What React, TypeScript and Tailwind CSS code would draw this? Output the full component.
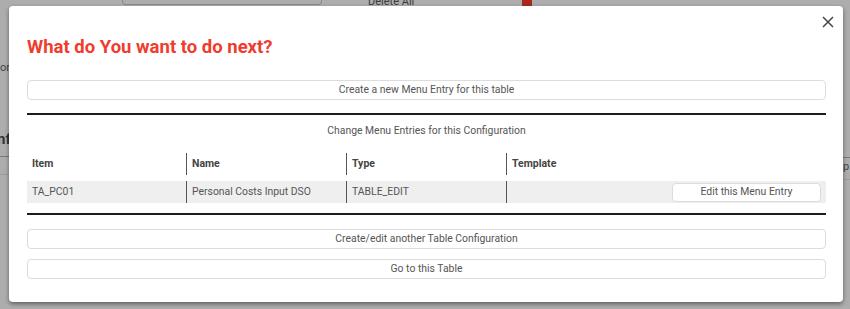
import * as React from 'react';

const font = { fontFamily: 'Roboto, "Noto Sans", Arial, sans-serif' };

function ActionButton({ label }: { label: string }) {
  return (
    <button className="flex h-[20px] w-full items-center justify-center rounded-[4px] border border-[#dcdcdc] bg-white text-[10.4px] text-[#555]">
      {label}
    </button>
  );
}

const rows = [{ item: 'TA_PC01', name: 'Personal Costs Input DSO', type: 'TABLE_EDIT', template: '' }];

function Backdrop() {
  // faded page behind the dialog
  return (
    <div className="flex h-full w-full flex-col text-[#333]">
      <div className="flex h-[6px] items-start">
        <div className="ml-[122px] h-[5px] w-[200px] rounded-b-[4px] border-x border-b border-[#8a8a8a]" />
        <div className="ml-[46px] -mt-[4px] text-[11px] leading-[12px] text-[#3a3a3a]">Delete All</div>
        <div className="ml-[108px] h-[6px] w-[10px] bg-[#a8281e]" />
      </div>
      <div className="flex flex-1">
        <div className="flex w-[9px] flex-col overflow-hidden">
          <div className="mt-[56px] text-[11px] leading-[12px] text-[#444]">or</div>
          <div className="-ml-[3px] mt-[56px] text-[15px] font-bold leading-[18px] text-[#333]">nf</div>
          <div className="mt-[8px] h-px w-full bg-[#7a7a7a]" />
          <div className="mt-[17px] h-px w-full bg-[#9c9c9c]" />
        </div>
        <div className="flex-1" />
        <div className="flex w-[7px] flex-col overflow-hidden">
          <div className="mt-[151px] h-px w-full bg-[#7a7a7a]" />
          <div className="mt-[3px] text-[11px] leading-[12px] text-[#444]">p</div>
          <div className="mt-[6px] h-px w-full bg-[#9c9c9c]" />
        </div>
      </div>
    </div>
  );
}

export default function App() {
  return (
    <div className="relative h-[309px] w-[850px] overflow-hidden bg-[#adadad]" style={font}>
      <Backdrop />

      <div className="absolute left-[9px] top-[6px] flex h-[296px] w-[834px] flex-col rounded-[4px] bg-white pl-[18px] pr-[17px] shadow-[0_2px_4px_rgba(0,0,0,0.45)]">
        <button className="absolute right-[9px] top-[9px] flex h-[13px] w-[13px] items-center justify-center text-[#444]">
          <svg width="12" height="12" viewBox="0 0 12 12" fill="none" stroke="currentColor" strokeWidth="1.5">
            <path d="M1 1L11 11M11 1L1 11" />
          </svg>
        </button>

        <h2 className="mt-[29px] text-[18.5px] font-bold leading-[24px] text-[#f03c2e]">What do You want to do next?</h2>

        <div className="mt-[21px]">
          <ActionButton label="Create a new Menu Entry for this table" />
        </div>

        <div className="mt-[13px] h-[2px] w-full bg-[#1c1c1c]" />

        <div className="mt-[8px] text-center text-[10.4px] leading-[16px] text-[#555]">
          Change Menu Entries for this Configuration
        </div>

        <div className="mt-[14px] flex h-[22px] items-stretch text-[10.5px] font-bold text-[#444]">
          <div className="flex w-[159px] items-center pl-[5px]">Item</div>
          <div className="flex w-[160px] items-center border-l border-[#555] pl-[5px]">Name</div>
          <div className="flex w-[160px] items-center border-l border-[#555] pl-[5px]">Type</div>
          <div className="flex flex-1 items-center border-l border-[#555] pl-[5px]">Template</div>
        </div>

        {rows.map((r) => (
          <div key={r.item} className="mt-[6px] flex h-[22px] items-stretch bg-[#efefef] text-[10.4px] text-[#555]">
            <div className="flex w-[159px] items-center pl-[5px]">{r.item}</div>
            <div className="flex w-[160px] items-center border-l border-[#555] pl-[5px]">{r.name}</div>
            <div className="flex w-[160px] items-center border-l border-[#555] pl-[5px]">{r.type}</div>
            <div className="flex flex-1 items-center justify-between border-l border-[#555] pl-[5px] pr-[5px]">
              <span>{r.template}</span>
              <button className="flex h-[19px] w-[149px] items-center justify-center rounded-[4px] border border-[#dcdcdc] bg-white text-[10.4px] text-[#555]">
                Edit this Menu Entry
              </button>
            </div>
          </div>
        ))}

        <div className="mt-[10px] h-[2px] w-full bg-[#1c1c1c]" />

        <div className="mt-[14px]">
          <ActionButton label="Create/edit another Table Configuration" />
        </div>
        <div className="mt-[10px]">
          <ActionButton label="Go to this Table" />
        </div>
      </div>
    </div>
  );
}
